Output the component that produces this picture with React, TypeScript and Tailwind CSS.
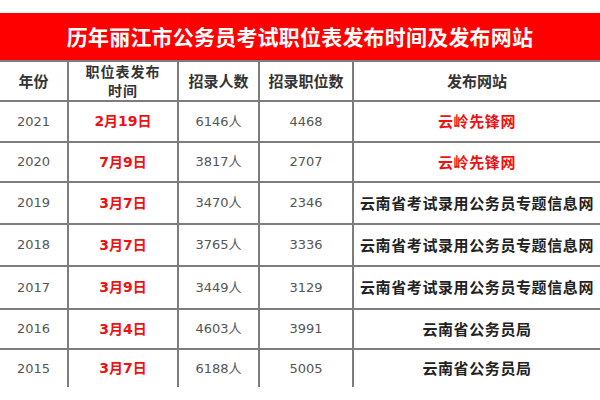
import React from "react";

interface RowData {
  year: string;
  date: string;
  people: string;
  posts: string;
  site: string;
  siteRed: boolean;
  h: string;
}

const rows: RowData[] = [
  { year: "2021", date: "2月19日", people: "6146人", posts: "4468", site: "云岭先锋网", siteRed: true, h: "h-[41px]" },
  { year: "2020", date: "7月9日", people: "3817人", posts: "2707", site: "云岭先锋网", siteRed: true, h: "h-[40px]" },
  { year: "2019", date: "3月7日", people: "3470人", posts: "2346", site: "云南省考试录用公务员专题信息网", siteRed: false, h: "h-[42px]" },
  { year: "2018", date: "3月7日", people: "3765人", posts: "3336", site: "云南省考试录用公务员专题信息网", siteRed: false, h: "h-[42px]" },
  { year: "2017", date: "3月9日", people: "3449人", posts: "3129", site: "云南省考试录用公务员专题信息网", siteRed: false, h: "h-[43px]" },
  { year: "2016", date: "3月4日", people: "4603人", posts: "3991", site: "云南省公务员局", siteRed: false, h: "h-[40px]" },
  { year: "2015", date: "3月7日", people: "6188人", posts: "5005", site: "云南省公务员局", siteRed: false, h: "h-[37px]" },
];

const grid = "grid grid-cols-[69px_110px_81px_94px_1fr]";
const cell = "flex items-center justify-center border-r-2 border-[#7d7d7d]";
const num = "font-['DejaVu_Sans','Noto_Sans_CJK_SC',sans-serif] text-[13px] text-[#555]";
const head = "font-['Noto_Sans_CJK_SC',sans-serif] font-bold text-[15px] text-[#333]";

const App: React.FC = () => {
  return (
    <div className="w-[600px] h-[400px] bg-white pt-[13px] overflow-hidden">
      {/* 标题 */}
      <div className="h-[47px] bg-[#ff0000] flex items-center justify-center">
        <span className="font-['Noto_Sans_CJK_SC',serif] font-bold text-[21px] text-white tracking-[0.2px]">
          历年丽江市公务员考试职位表发布时间及发布网站
        </span>
      </div>

      {/* 表头 */}
      <div className={`${grid} h-[42px] border-t-2 border-b-2 border-[#7d7d7d]`}>
        <div className={`${cell} ${head}`}>年份</div>
        <div className={`${cell} ${head}`}>
          <p className="text-center text-[14px] leading-[19px] tracking-[1px]">
            职位表发布
            <br />
            时间
          </p>
        </div>
        <div className={`${cell} ${head}`}>招录人数</div>
        <div className={`${cell} ${head}`}>招录职位数</div>
        <div className={`flex items-center justify-center ${head}`}>发布网站</div>
      </div>

      {rows.map((r, i) => (
        <div
          key={r.year}
          className={`${grid} ${r.h} ${i < rows.length - 1 ? "border-b-2 border-[#7d7d7d]" : ""}`}
        >
          <div className={`${cell} ${num}`}>{r.year}</div>
          <div className={`${cell} font-['DejaVu_Sans','Noto_Sans_CJK_SC',sans-serif] font-bold text-[14px] text-[#ee1111]`}>
            {r.date}
          </div>
          <div className={`${cell} ${num}`}>{r.people}</div>
          <div className={`${cell} ${num}`}>{r.posts}</div>
          <div
            className={`flex items-center justify-center whitespace-nowrap font-['Noto_Sans_CJK_SC',sans-serif] font-bold text-[15px] tracking-[0.6px] ${
              r.siteRed ? "text-[#ee1111]" : "text-[#222]"
            }`}
          >
            {r.site}
          </div>
        </div>
      ))}
    </div>
  );
};

export default App;
